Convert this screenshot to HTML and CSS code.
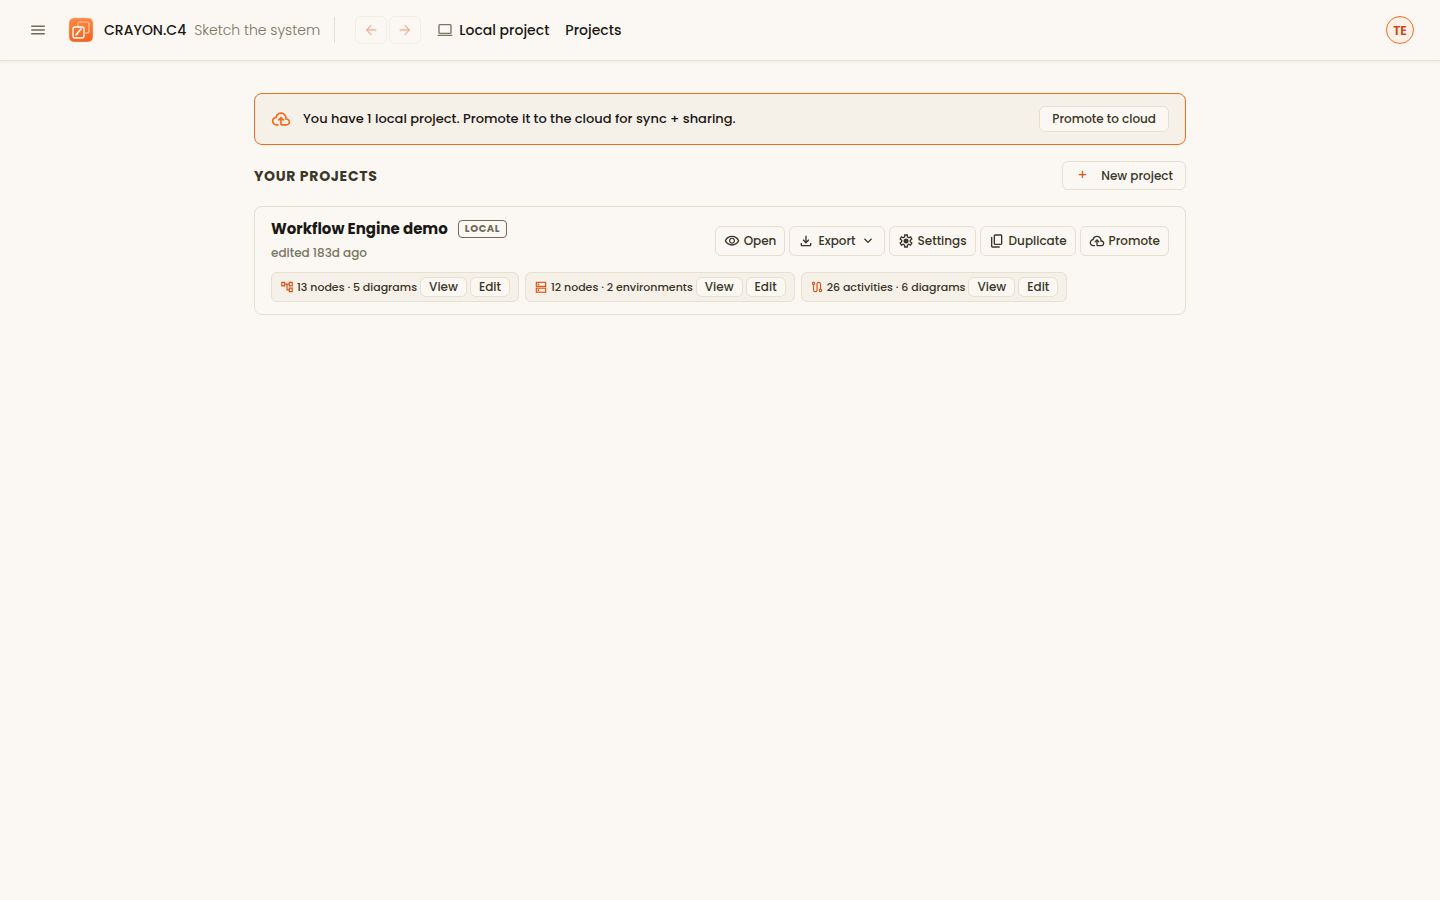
FILE: index.html
```html
<!DOCTYPE html>
<html lang="en">
<head>
  <meta charset="UTF-8">
  <meta name="viewport" content="width=device-width, initial-scale=1">
  <title>Projects – CRAYON.C4</title>
  <link rel="stylesheet" href="styles.css">
</head>
<body>

  <!-- Shared icons -->
  <svg class="icon-defs" aria-hidden="true">
    <symbol id="icon-upload" viewBox="0 -960 960 960"><path d="M260-160q-91 0-155.500-63T40-377q0-78 47-139t123-78q25-92 100-149t170-57q117 0 198.500 81.500T760-520q69 8 114.500 59.500T920-340q0 75-52.500 127.500T740-160H520q-33 0-56.500-23.500T440-240v-206l-64 62-56-56 160-160 160 160-56 56-64-62v206h220q42 0 71-29t29-71q0-42-29-71t-71-29h-60v-80q0-83-58.500-141.500T480-720q-83 0-141.500 58.500T280-520h-20q-58 0-99 41t-41 99q0 58 41 99t99 41h100v80H260Z"/></symbol>
    <symbol id="icon-eye" viewBox="0 -960 960 960"><path d="M480-320q75 0 127.500-52.500T660-500q0-75-52.500-127.500T480-680q-75 0-127.500 52.500T300-500q0 75 52.500 127.500T480-320Zm0-72q-45 0-76.500-31.500T372-500q0-45 31.500-76.500T480-608q45 0 76.500 31.500T588-500q0 45-31.500 76.500T480-392Zm0 192q-146 0-266-81.500T40-500q54-137 174-218.500T480-800q146 0 266 81.500T920-500q-54 137-174 218.500T480-200Zm0-80q113 0 207.500-59.500T832-500q-50-101-144.500-160.500T480-720q-113 0-207.500 59.500T128-500q50 101 144.500 160.500T480-280Z"/></symbol>
    <symbol id="icon-download" viewBox="0 -960 960 960"><path d="M480-320 280-520l56-58 104 104v-326h80v326l104-104 56 58-200 200ZM240-160q-33 0-56.500-23.500T160-240v-120h80v120h480v-120h80v120q0 33-23.500 56.500T720-160H240Z"/></symbol>
    <symbol id="icon-chevron" viewBox="0 -960 960 960"><path d="M480-344 240-584l56-56 184 184 184-184 56 56-240 240Z"/></symbol>
    <symbol id="icon-settings" viewBox="0 -960 960 960"><path d="m370-80-16-128q-13-5-24.500-12T307-235l-119 50L78-375l103-78q-1-7-1-13.500v-27q0-6.500 1-13.500L78-585l110-190 119 50q11-8 23-15t24-12l16-128h220l16 128q13 5 24.500 12t22.500 15l119-50 110 190-103 78q1 7 1 13.500v27q0 6.500-2 13.500l103 78-110 190-118-50q-11 8-23 15t-24 12L590-80H370Zm70-80h79l14-106q31-8 57.500-23.500T639-327l99 41 39-68-86-65q5-14 7-29.500t2-31.500q0-16-2-31.500t-7-29.500l86-65-39-68-99 42q-22-23-48.500-38.500T533-694l-13-106h-79l-14 106q-31 8-57.500 23.500T321-633l-99-41-39 68 86 64q-5 15-7 30t-2 32q0 16 2 31t7 30l-86 65 39 68 99-42q22 23 48.500 38.500T427-266l13 106Z"/><circle cx="482" cy="-480" r="150"/></symbol>
    <symbol id="icon-copy" viewBox="0 -960 960 960"><path d="M360-240q-33 0-56.500-23.500T280-320v-480q0-33 23.500-56.500T360-880h360q33 0 56.500 23.500T800-800v480q0 33-23.500 56.500T720-240H360Zm0-80h360v-480H360v480ZM200-80q-33 0-56.500-23.500T120-160v-560h80v560h440v80H200Z"/></symbol>
    <symbol id="icon-tree" viewBox="0 -960 960 960"><path d="M600-120v-120H440v-400h-80v120H80v-320h280v120h240v-120h280v320H600v-120h-80v320h80v-120h280v320H600Zm80-480h120v-160H680v160Zm0 400h120v-160H680v160ZM160-600h120v-160H160v160Z"/></symbol>
    <symbol id="icon-servers" viewBox="0 0 24 24"><g fill="none" stroke="currentColor" stroke-width="2"><rect x="4" y="4" width="16" height="7"/><rect x="4" y="14" width="16" height="7"/></g><circle cx="7.500" cy="7.500" r="1.500"/><circle cx="7.500" cy="17.500" r="1.500"/></symbol>
    <symbol id="icon-route" viewBox="0 0 24 24"><g fill="none" stroke="currentColor" stroke-width="2"><circle cx="6" cy="6" r="2"/><circle cx="18" cy="18" r="2"/><path d="M6 8v9a3 3 0 0 0 6 0V7a3 3 0 0 1 6 0v9"/></g></symbol>
  </svg>

  <!-- Top bar -->
  <header class="topbar">
    <button type="button" class="menu-btn" aria-label="Menu">
      <svg class="icon-lg" viewBox="0 -960 960 960"><path d="M120-240v-80h720v80H120Zm0-200v-80h720v80H120Zm0-200v-80h720v80H120Z"/></svg>
    </button>

    <a href="#" class="brand">
      <svg class="logo" viewBox="0 0 26 26">
        <defs>
          <linearGradient id="logo-fill" x1="0" y1="0" x2="0" y2="1">
            <stop offset="0" stop-color="#ff8740"/>
            <stop offset="1" stop-color="#f0641e"/>
          </linearGradient>
        </defs>
        <rect x="1" y="1" width="24" height="24" rx="5" fill="url(#logo-fill)" stroke="#ffc9a8" stroke-width="0.500"/>
        <path d="M10 9V7a2 2 0 0 1 2-2h7a2 2 0 0 1 2 2v7a2 2 0 0 1-2 2h-2" fill="none" stroke="#ffc6a6" stroke-width="1.200"/>
        <rect x="5" y="10" width="11" height="11" rx="2" fill="none" stroke="#fff" stroke-width="1.300"/>
        <path d="M8 18l5-6" stroke="#fff" stroke-width="1.600" stroke-linecap="round"/>
      </svg>
      <span class="brand-name">CRAYON.C4</span>
      <span class="tagline">Sketch the system</span>
    </a>

    <div class="history">
      <button type="button" disabled aria-label="Back">
        <svg class="icon" viewBox="0 -960 960 960"><path d="m313-440 224 224-57 56-320-320 320-320 57 56-224 224h487v80H313Z"/></svg>
      </button>
      <button type="button" disabled aria-label="Forward">
        <svg class="icon" viewBox="0 -960 960 960"><path d="M647-440H160v-80h487L423-744l57-56 320 320-320 320-57-56 224-224Z"/></svg>
      </button>
    </div>

    <nav class="crumbs">
      <a href="#">
        <svg class="icon" viewBox="0 -960 960 960"><path d="M40-120v-80h880v80H40Zm120-120q-33 0-56.500-23.500T80-320v-440q0-33 23.500-56.500T160-840h640q33 0 56.500 23.500T880-760v440q0 33-23.500 56.500T800-240H160Zm0-80h640v-440H160v440Z"/></svg>
        Local project
      </a>
      <a href="#">Projects</a>
    </nav>

    <button type="button" class="avatar">TE</button>
  </header>

  <main class="content">

    <!-- Promote banner -->
    <div class="banner">
      <svg class="icon-xl"><use href="#icon-upload"/></svg>
      <p>You have 1 local project. Promote it to the cloud for sync + sharing.</p>
      <button type="button" class="btn btn-promote">Promote to cloud</button>
    </div>

    <div class="section-head">
      <h1>Your projects</h1>
      <button type="button" class="btn btn-new"><span class="plus">+</span>New project</button>
    </div>

    <!-- Project card -->
    <article class="card">
      <div class="card-top">
        <div class="card-info">
          <div class="title-row">
            <h2>Workflow Engine demo</h2>
            <span class="badge">LOCAL</span>
          </div>
          <p class="edited">edited 183d ago</p>
        </div>
        <div class="actions">
          <button type="button" class="btn"><svg class="icon"><use href="#icon-eye"/></svg>Open</button>
          <button type="button" class="btn"><svg class="icon"><use href="#icon-download"/></svg>Export<svg class="icon"><use href="#icon-chevron"/></svg></button>
          <button type="button" class="btn"><svg class="icon"><use href="#icon-settings"/></svg>Settings</button>
          <button type="button" class="btn"><svg class="icon"><use href="#icon-copy"/></svg>Duplicate</button>
          <button type="button" class="btn"><svg class="icon"><use href="#icon-upload"/></svg>Promote</button>
        </div>
      </div>

      <div class="chips">
        <div class="chip">
          <svg class="icon-sm"><use href="#icon-tree"/></svg>
          <span>13 nodes · 5 diagrams</span>
          <a href="#" class="chip-btn">View</a>
          <a href="#" class="chip-btn">Edit</a>
        </div>
        <div class="chip">
          <svg class="icon-sm"><use href="#icon-servers"/></svg>
          <span>12 nodes · 2 environments</span>
          <a href="#" class="chip-btn">View</a>
          <a href="#" class="chip-btn">Edit</a>
        </div>
        <div class="chip">
          <svg class="icon-sm"><use href="#icon-route"/></svg>
          <span>26 activities · 6 diagrams</span>
          <a href="#" class="chip-btn">View</a>
          <a href="#" class="chip-btn">Edit</a>
        </div>
      </div>
    </article>
  </main>
</body>
</html>
```
FILE: styles.css
```css
* {
  box-sizing: border-box;
}
body {
  margin: 0;
  min-height: 100vh;
  background: #fbf8f3;
  color: #1a1814;
  font-family: Poppins, Inter, sans-serif;
  font-size: 12px;
  font-weight: 500;
}
h1, h2, p {
  margin: 0;
}
a {
  color: inherit;
  text-decoration: none;
}
button {
  font: inherit;
  color: inherit;
  cursor: pointer;
}
svg {
  display: block;
  flex: none;
  fill: currentColor;
}
.icon-defs {
  position: absolute;
  width: 0;
  height: 0;
}
.icon-sm { width: 14px; height: 14px; }
.icon { width: 16px; height: 16px; }
.icon-lg { width: 18px; height: 18px; }
.icon-xl { width: 20px; height: 20px; }

/* top bar */
.topbar {
  display: flex;
  align-items: center;
  height: 61px;
  padding: 0 26px 0 24px;
  border-bottom: 1px solid #e6e0d0;
  box-shadow: 0 1px 3px rgba(60, 50, 20, 0.06);
}
.menu-btn {
  display: flex;
  padding: 5px;
  border: none;
  background: none;
  color: #6f6957;
}
.brand {
  display: flex;
  align-items: center;
  gap: 8px;
  height: 26px;
  margin-left: 16px;
  padding-right: 14px;
  border-right: 1px solid #e6e0d0;
  font-size: 14px;
}
.logo {
  width: 26px;
  height: 26px;
  margin-right: 2px;
}
.tagline {
  color: #7a7462;
  font-weight: 300;
}
.history {
  display: flex;
  gap: 2px;
  margin-left: 20px;
}
.history button {
  display: flex;
  align-items: center;
  justify-content: center;
  width: 32px;
  height: 28px;
  padding: 0;
  border: 1px solid #e6e0d0;
  border-radius: 6px;
  background: none;
  color: #e8501a;
  opacity: 0.4;
}
.crumbs {
  display: flex;
  gap: 16px;
  margin-left: 16px;
  font-size: 14px;
}
.crumbs a {
  display: flex;
  align-items: center;
  gap: 6px;
}
.crumbs svg {
  color: #7a7462;
}
.avatar {
  width: 28px;
  height: 28px;
  margin-left: auto;
  padding: 0;
  border: 1px solid #f26b21;
  border-radius: 50%;
  background: #fff1e8;
  color: #c9480f;
  font-family: "Noto Sans", sans-serif;
  font-weight: 700;
}

/* page */
.content {
  max-width: 980px;
  margin: 0 auto;
  padding: 32px 24px;
}
.btn {
  display: flex;
  align-items: center;
  gap: 4px;
  height: 30px;
  padding: 0 8px;
  border: 1px solid #e6e0d0;
  border-radius: 6px;
  background: #fbf8f3;
  color: #3a3628;
}
.banner {
  display: flex;
  align-items: center;
  gap: 12px;
  height: 52px;
  padding: 0 16px;
  border: 1px solid #f26b21;
  border-radius: 8px;
  background: #f5f0e8;
  font-size: 13px;
}
.banner > svg {
  color: #f26b21;
}
.btn-promote {
  height: 26px;
  margin-left: auto;
  padding: 0 12px;
  font-size: 12px;
}
.section-head {
  display: flex;
  align-items: center;
  justify-content: space-between;
  margin: 16px 0;
}
.section-head h1 {
  color: #3a3628;
  font-size: 14px;
  font-weight: 700;
  line-height: 20px;
  letter-spacing: 0.05em;
  text-transform: uppercase;
}
.btn-new {
  gap: 14px;
  height: 29px;
  padding: 0 12px 0 15px;
}
.plus {
  color: #d9541a;
  font-size: 14px;
  font-weight: 400;
}

/* project card */
.card {
  padding: 12px 16px;
  border: 1px solid #e6e0d0;
  border-radius: 8px;
}
.card-top {
  display: flex;
  align-items: center;
  justify-content: space-between;
}
.title-row {
  display: flex;
  align-items: center;
  gap: 10px;
}
.title-row h2 {
  font-size: 15px;
  font-weight: 700;
  line-height: 20px;
}
.badge {
  padding: 0 6px;
  border: 1px solid #6f6957;
  border-radius: 4px;
  color: #6f6957;
  font-size: 10px;
  font-weight: 700;
  line-height: 16px;
  letter-spacing: 0.06em;
}
.edited {
  margin-top: 4px;
  color: #7a7462;
  line-height: 20px;
}
.actions {
  display: flex;
  gap: 4px;
}
.chips {
  display: flex;
  gap: 6px;
  margin-top: 9px;
}
.chip {
  display: flex;
  align-items: center;
  gap: 3px;
  height: 30px;
  padding: 0 8px;
  border: 1px solid #e6e0d0;
  border-radius: 6px;
  background: #f5f0e8;
  color: #3a3628;
  font-size: 11px;
  line-height: 18px;
}
.chip svg {
  color: #d9541a;
}
.chip-btn {
  height: 20px;
  padding: 0 8px;
  border: 1px solid #e6e0d0;
  border-radius: 6px;
  background: #fbf8f3;
  font-size: 12px;
}
```
